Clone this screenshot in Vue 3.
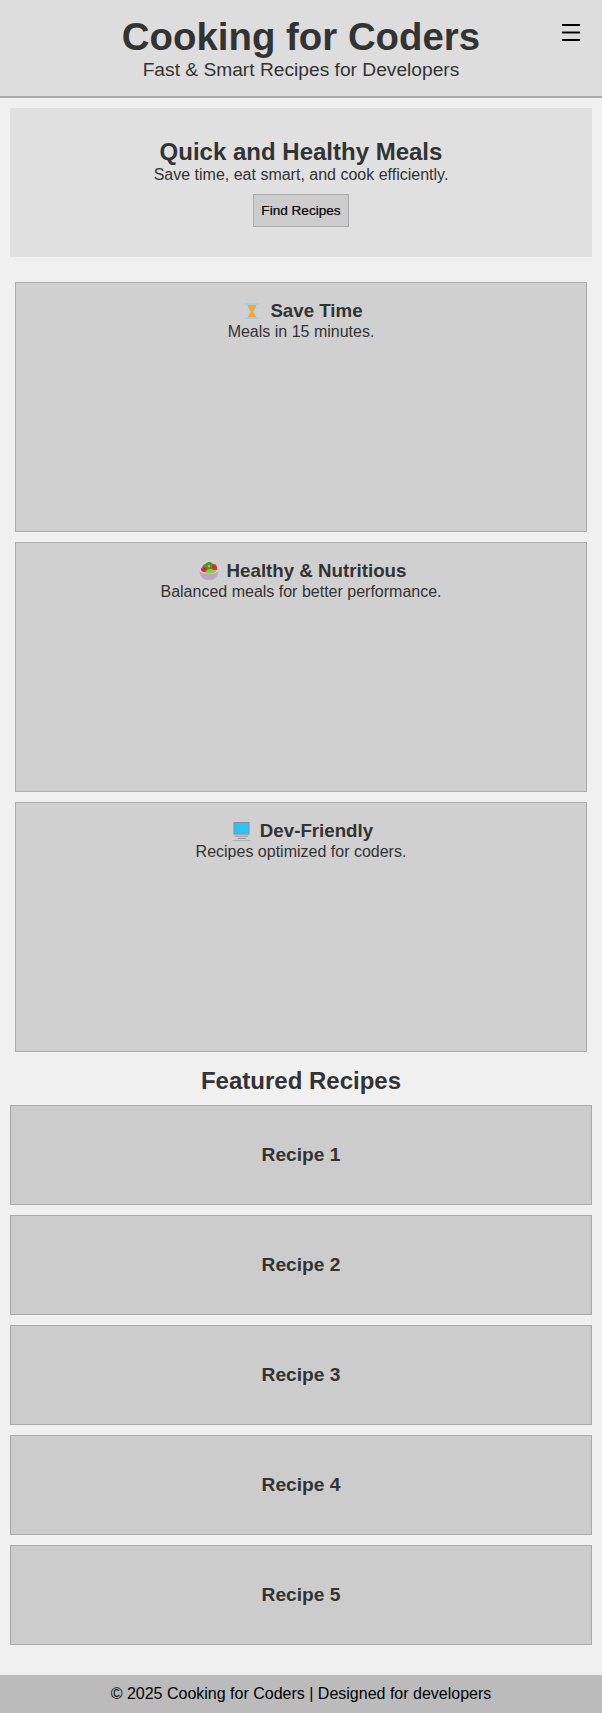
<script setup>
const features = [
  { icon: 'hourglass', title: 'Save Time', text: 'Meals in 15 minutes.' },
  { icon: 'salad', title: 'Healthy & Nutritious', text: 'Balanced meals for better performance.' },
  { icon: 'computer', title: 'Dev-Friendly', text: 'Recipes optimized for coders.' },
]
const recipes = ['Recipe 1', 'Recipe 2', 'Recipe 3', 'Recipe 4', 'Recipe 5']
</script>

<template>
  <div class="page">
    <header class="header">
      <h1>Cooking for Coders</h1>
      <p>Fast &amp; Smart Recipes for Developers</p>
      <button class="menu" aria-label="Menu">
        <svg width="18" height="17" viewBox="0 0 18 17">
          <path d="M0 0h18v2H0zM0 8h18v1H0zM0 15h18v2H0z" fill="#000" />
          <path d="M0 7h18v1H0zM0 9h18v1H0z" fill="#777" />
        </svg>
      </button>
    </header>

    <section class="hero">
      <h2>Quick and Healthy Meals</h2>
      <p>Save time, eat smart, and cook efficiently.</p>
      <button class="find">Find Recipes</button>
    </section>

    <section class="features">
      <article v-for="f in features" :key="f.title" class="card">
        <h3>
          <svg v-if="f.icon === 'hourglass'" class="icon" viewBox="0 0 26 21">
            <path d="M7 4v3c0 2.500 3 3 3 4.500s-3 2-3 4.500v2h12v-2c0-2.500-3-3-3-4.500s3-2 3-4.500V4z" fill="#acd8f4" />
            <path d="M9 5h8v1.500c0 2-2.500 3-2.500 5s2 2.500 2.500 6H9c.5-3.500 2.500-4 2.500-6s-2.500-3-2.500-5z" fill="#fca52c" />
            <path d="M7 3h12v2H7zM7 17.500h12v1.500H7z" fill="#9bd0f5" />
          </svg>
          <svg v-else-if="f.icon === 'salad'" class="icon" viewBox="0 0 26 21">
            <path d="M3.500 10.500C3.500 17 7.500 20 13 20s9.500-3 9.500-9.500z" fill="#b5aabd" />
            <ellipse cx="13" cy="10.500" rx="9.500" ry="3.500" fill="#d8d2dd" />
            <path d="M5 9.500C6 6 8 4 10 3.500 11.500 1.500 15 1.500 16 3.500c3 0 5 3 5 6l-3 2H8z" fill="#499528" />
            <path d="M5 8.500l4-1.500 3 3v2H7l-2-1.500zM16 5l4-.5 1.500 5-3 1-2.500-3z" fill="#e91d43" />
            <path d="M11 9.500l3-.5 4 1 2 1.500c-1.500 1.500-4 2-7 2s-4-.5-5-1.500l3-.5z" fill="#83d531" />
            <circle cx="13" cy="6" r="1.300" fill="#d8b428" />
            <path d="M9.500 11l2-1 1 1.500-1 1zM17.500 10l2.500-.5v2l-2 .5z" fill="#f49b28" />
          </svg>
          <svg v-else class="icon" viewBox="0 0 26 21">
            <path d="M4.500 2h16v12.500h-16z" fill="#858d93" />
            <path d="M5.500 3h14v10.500h-14z" fill="#27c5ff" />
            <path d="M5 15h15v1H5z" fill="#b8b8ba" />
            <path d="M6 16h13v1H6z" fill="#aaa" />
            <path d="M9 18h8v1H9z" fill="#999" />
            <path d="M3.500 20h18v1h-18z" fill="#b0b0b0" />
          </svg>
          <span>{{ f.title }}</span>
        </h3>
        <p>{{ f.text }}</p>
      </article>
    </section>

    <section class="featured">
      <h2>Featured Recipes</h2>
      <div class="recipes">
        <article v-for="r in recipes" :key="r" class="recipe"><h3>{{ r }}</h3></article>
      </div>
    </section>

    <footer class="footer">© 2025 Cooking for Coders | Designed for developers</footer>
  </div>
</template>

<style>
body {
  margin: 0;
  background: #f0f0f0;
}
</style>

<style scoped>
.page {
  font-family: "Liberation Sans", Arial, sans-serif;
  font-size: 16px;
  line-height: 18px;
  color: #333;
  text-align: center;
}
.page * {
  box-sizing: border-box;
}
h1, h2, h3, p {
  margin: 0;
}
h2 {
  font-size: 24px;
  line-height: 27px;
}
h3 {
  font-size: 18.72px;
  line-height: 21px;
}
.header {
  position: relative;
  height: 98px;
  padding-top: 15px;
  background: #ddd;
  border-bottom: 2px solid #aaa;
}
.header h1 {
  font-size: 38.4px;
  line-height: 44px;
}
.header p {
  font-size: 19.2px;
  line-height: 22px;
}
.menu {
  position: absolute;
  top: 24px;
  right: 22px;
  padding: 0;
  border: 0;
  background: none;
}
.menu svg {
  display: block;
}
.hero {
  height: 149px;
  margin: 10px 10px 0;
  padding-top: 30px;
  background: #e0e0e0;
}
.hero p {
  margin-top: 1px;
}
.find {
  display: block;
  width: 96px;
  height: 33px;
  margin: 10px auto 0;
  padding: 0;
  font-family: inherit;
  font-size: 13.6px;
  color: #000;
  -webkit-text-stroke: 0.2px #000;
  background: #ccc;
  border: 1px solid #aaa;
}
.features {
  display: grid;
  gap: 10px;
  margin: 25px 15px 15px;
}
.card {
  height: 250px;
  padding-top: 17px;
  background: #d0d0d0;
  border: 1px solid #aaa;
}
.card h3 {
  display: flex;
  justify-content: center;
  gap: 5px;
  margin-bottom: 2px;
}
.icon {
  width: 26px;
  height: 21px;
}
.recipes {
  display: grid;
  gap: 10px;
  margin: 11px 10px 30px;
}
.recipe {
  display: flex;
  align-items: center;
  justify-content: center;
  height: 100px;
  padding-bottom: 2px;
  background: #ccc;
  border: 1px solid #aaa;
}
.recipe h3 {
  font-size: 19.2px;
}
.footer {
  height: 38px;
  padding-top: 10px;
  color: #000;
  background: #bbb;
}
</style>
